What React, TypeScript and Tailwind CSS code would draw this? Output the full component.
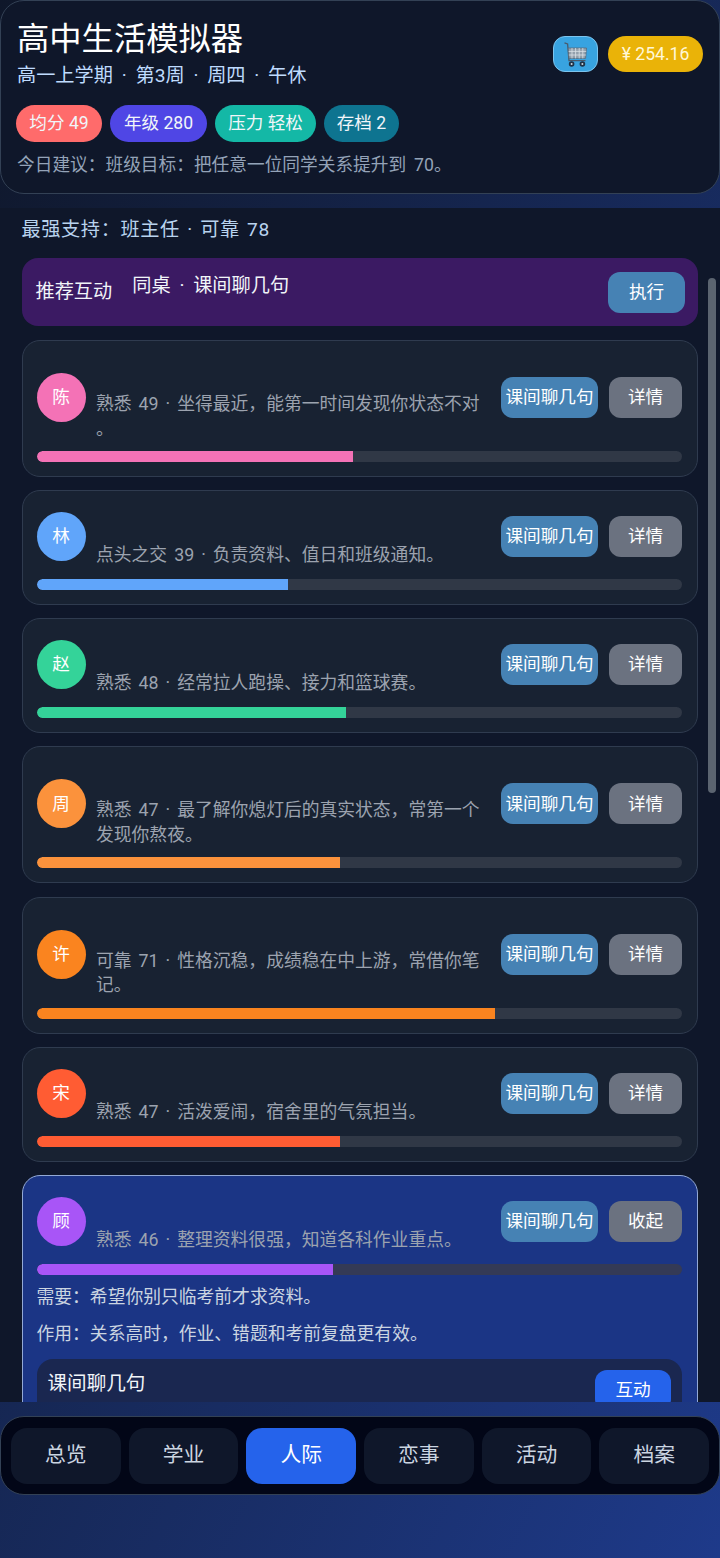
import React from "react";

function Cart() {
  return (
    <svg width="23" height="25" viewBox="0 0 23 25" fill="none">
      <path d="M0.5 0.8 L3.6 2 L5 18.6 L21.5 18.6" stroke="#4a5a6a" strokeWidth="1.3" fill="none" />
      <path d="M4.2 6 H22.5 L21.6 16.4 H5 Z" fill="#93a0ac" stroke="#56687a" strokeWidth="0.8" />
      <path d="M8 6 V16.4 M11.6 6 V16.4 M15.2 6 V16.4 M18.8 6 V16.4 M4.6 9.4 H22.2 M4.8 13 H21.9" stroke="#dce2e7" strokeWidth="0.8" />
      <circle cx="7.6" cy="22" r="2.8" fill="#1f3347" />
      <circle cx="7.6" cy="22" r="1" fill="#cfd8e0" />
      <circle cx="18.4" cy="22" r="2.8" fill="#1f3347" />
      <circle cx="18.4" cy="22" r="1" fill="#cfd8e0" />
    </svg>
  );
}

type P = { name: string; text: string; pct: number; color: string };

const people: P[] = [
  { name: "陈", text: "熟悉 49 · 坐得最近，能第一时间发现你状态不对。", pct: 49, color: "#f472b6" },
  { name: "林", text: "点头之交 39 · 负责资料、值日和班级通知。", pct: 39, color: "#60a5fa" },
  { name: "赵", text: "熟悉 48 · 经常拉人跑操、接力和篮球赛。", pct: 48, color: "#34d399" },
  { name: "周", text: "熟悉 47 · 最了解你熄灯后的真实状态，常第一个发现你熬夜。", pct: 47, color: "#fb923c" },
  { name: "许", text: "可靠 71 · 性格沉稳，成绩稳在中上游，常借你笔记。", pct: 71, color: "#fa841f" },
  { name: "宋", text: "熟悉 47 · 活泼爱闹，宿舍里的气氛担当。", pct: 47, color: "#ff5c33" },
];

function Top({ p, action, track }: { p: P; action: string; track: string }) {
  return (
    <>
      <div className="flex items-center min-h-[60.4px]">
        <div
          className="w-[49px] h-[49px] shrink-0 rounded-full flex items-center justify-center text-white text-[17.6px]"
          style={{ backgroundColor: p.color }}
        >
          {p.name}
        </div>
        <div className="w-[388px] ml-[10.5px] pt-[36px] -mb-[2.2px] text-[17.8px] leading-[24.5px] text-[#9ca3af] [line-break:anywhere] [word-spacing:2.6px]">
          {p.text}
        </div>
        <button className="ml-[17.5px] w-[97px] h-[41px] rounded-[12px] bg-[#4682b4] text-white text-[17.6px] shrink-0">
          课间聊几句
        </button>
        <button className="ml-[11px] w-[73px] h-[41px] rounded-[12px] bg-[#6b7280] text-white text-[17.6px] shrink-0">
          {action}
        </button>
      </div>
      <div className={`mt-[12px] h-[11px] rounded-full overflow-hidden ${track}`}>
        <div className="h-full rounded-l-full" style={{ width: `${p.pct}%`, backgroundColor: p.color }} />
      </div>
    </>
  );
}

export default function App() {
  const tabs = ["总览", "学业", "人际", "恋事", "活动", "档案"];
  const pills = [
    ["均分 49", "bg-[#ff6b6b] w-[86px]"],
    ["年级 280", "bg-[#4f46e5] w-[97px]"],
    ["压力 轻松", "bg-[#14b8a6] w-[101px]"],
    ["存档 2", "bg-[#0e7490] w-[75px]"],
  ];
  return (
    <div className="relative w-[720px] h-[1558px] overflow-hidden flex flex-col bg-gradient-to-br from-[#0f172a] to-[#1e3a8a] font-['Roboto','Noto_Sans_CJK_SC',sans-serif] text-white">
      <header className="h-[194px] shrink-0 rounded-[24px] border border-[#334155] bg-[#0f172a] px-[16px] pt-[15px]">
        <div className="flex items-center justify-between">
          <div>
            <h1 className="text-[32.3px] leading-[46px] font-normal">高中生活模拟器</h1>
            <div className="text-[19.2px] leading-[28px] text-[#bfdbfe] [word-spacing:4px]">高一上学期 · 第3周 · 周四 · 午休</div>
          </div>
          <div className="flex items-center gap-[10px] mt-[2px]">
            <button className="w-[45px] h-[36px] rounded-[12px] bg-[#38a3e0] border border-[#7cc4ee] flex items-center justify-center">
              <Cart />
            </button>
            <div className="w-[95px] h-[36px] rounded-full bg-[#eab308] flex items-center justify-center text-[17.6px] text-[#fff7d6]">
              ¥ 254.16
            </div>
          </div>
        </div>
        <div className="mt-[15px] flex gap-[8px] -ml-[1px]">
          {pills.map(([t, c]) => (
            <div key={t} className={`${c} h-[37px] rounded-full flex items-center justify-center text-[17.6px] text-[#f1f5f9]`}>
              {t}
            </div>
          ))}
        </div>
        <div className="mt-[10px] text-[17.7px] leading-[26px] text-[#94a3b8] [word-spacing:3.5px]">今日建议：班级目标：把任意一位同学关系提升到 70。</div>
      </header>

      <main className="relative mt-[14px] h-[1194px] shrink-0 overflow-hidden bg-[#0f172a] px-[21.5px] pt-[9px]">
        <div className="text-[19.2px] leading-[26px] tracking-[0.6px] text-[#b9d3ee] h-[25px] [word-spacing:2px]">最强支持：班主任 · 可靠 78</div>
        <div className="mt-[16px] w-[676.5px] h-[68px] rounded-[16px] bg-[#3b1a63] flex items-center pl-[14px] pr-[13px]">
          <div className="text-[19.2px] text-[#f1f5f9]">推荐互动</div>
          <div className="ml-[20px] -mt-[12px] flex-1 text-[19.2px] text-[#f1f5f9] [word-spacing:4px]">同桌 · 课间聊几句</div>
          <button className="w-[77px] h-[41px] rounded-[12px] bg-[#4682b4] text-white text-[17.6px]">执行</button>
        </div>
        <div className="mt-[14px] w-[676.5px] flex flex-col gap-[13.6px]">
          {people.map((p) => (
            <div key={p.name} className="rounded-[18px] border border-[#2f3b4f] bg-[#182232] pl-[14px] pr-[15px] pt-[15px] pb-[14px]">
              <Top p={p} action="详情" track="bg-[#303846]" />
            </div>
          ))}
          <div className="rounded-[18px] border border-[#93a9d6] bg-[#1b3585] pl-[14px] pr-[15px] pt-[15px] pb-[14px]">
            <Top p={{ name: "顾", text: "熟悉 46 · 整理资料很强，知道各科作业重点。", pct: 46, color: "#a855f7" }} action="收起" track="bg-[#343a56]" />
            <div className="mt-[9px] text-[17.8px] leading-[26px] text-[#cbd5e1]">需要：希望你别只临考前才求资料。</div>
            <div className="mt-[11px] text-[17.8px] leading-[26px] text-[#cbd5e1]">作用：关系高时，作业、错题和考前复盘更有效。</div>
            <div className="mt-[12px] h-[80px] rounded-[16px] bg-[#1a2750] pl-[11px] pr-[11px] pt-[12px] flex justify-between items-start">
              <div className="text-[19.6px] leading-[26px] text-[#f1f5f9]">课间聊几句</div>
              <button className="-mt-[1px] w-[76px] h-[41px] rounded-[12px] bg-[#2563eb] text-white text-[17.6px]">互动</button>
            </div>
          </div>
        </div>
        <div className="absolute left-[708px] top-[70px] w-[8px] h-[515px] rounded-full bg-[#5b6470]" />
      </main>

      <nav className="mt-[14px] h-[79px] shrink-0 rounded-[24px] border border-[#334155] bg-[#020617] px-[10px] flex items-center gap-[8px]">
        {tabs.map((t) => (
          <div
            key={t}
            className={`flex-1 h-[56px] rounded-[16px] flex items-center justify-center text-[20.8px] ${
              t === "人际" ? "bg-[#2563eb] text-white" : "bg-[#0f172a] text-[#cbd5e1]"
            }`}
          >
            {t}
          </div>
        ))}
      </nav>
    </div>
  );
}
